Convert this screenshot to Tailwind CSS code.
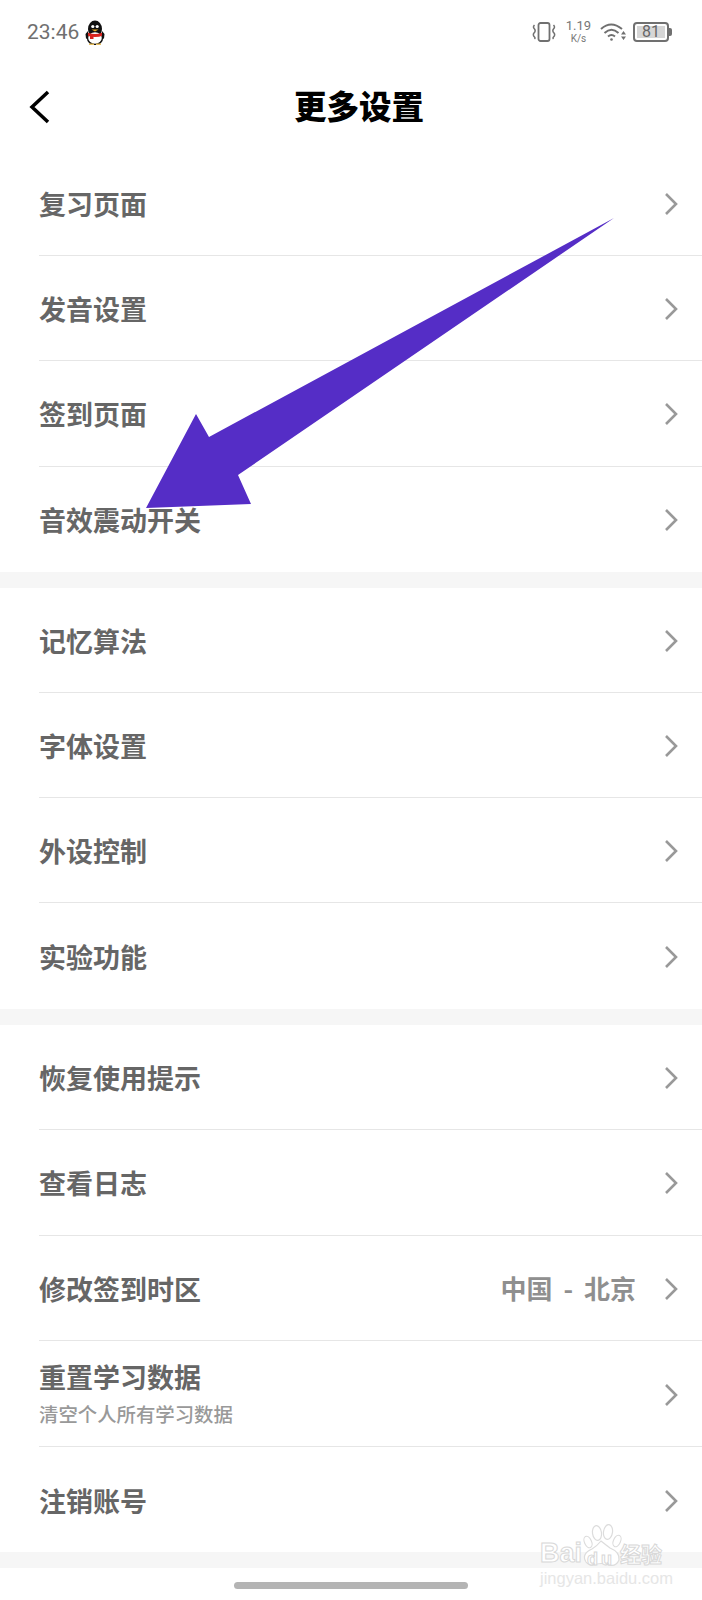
<!DOCTYPE html>
<html lang="zh">
<head>
<meta charset="utf-8">
<script src="https://cdn.jsdelivr.net/npm/@tailwindcss/browser@4"></script>
<title>更多设置</title>
</head>
<body class="bg-white">
<div class="relative w-[702px] h-[1600px] overflow-hidden bg-white font-['Noto_Sans_CJK_SC',sans-serif]">

  <!-- status bar -->
  <div class="h-[64px] flex items-center justify-between pl-[27px] pr-[30px]">
    <div class="flex items-center gap-[6px]">
      <span class="font-['Roboto',sans-serif] text-[21px] leading-none text-[#707070]">23:46</span>
      <svg width="20" height="25" viewBox="0 0 20 25">
        <ellipse cx="10" cy="9" rx="7" ry="8.5" fill="#111"/>
        <ellipse cx="10" cy="18" rx="7.5" ry="6.5" fill="#fff" stroke="#111" stroke-width="1.4"/>
        <path d="M2.5 12.5Q10 15.5 17.5 12.5L18 15.5Q10 18.5 2 15.5Z" fill="#d9231e"/>
        <rect x="5" y="15" width="3.5" height="4" fill="#d9231e"/>
        <circle cx="7.8" cy="6.5" r="1.6" fill="#fff"/><circle cx="12.2" cy="6.5" r="1.6" fill="#fff"/>
        <path d="M6.5 9.5H13.5L10 11.5Z" fill="#e8a820"/>
        <path d="M0.5 14L3 11V19L1 18.5ZM19.5 14L17 11V19L19 18.5Z" fill="#111"/>
        <path d="M4 23.5H9V25H4ZM11 23.5H16V25H11Z" fill="#e8c060"/>
      </svg>
    </div>
    <div class="flex items-center text-[#777]">
      <svg width="24" height="20" viewBox="0 0 24 20" fill="none" stroke="#707070">
        <rect x="6.5" y="1" width="11" height="18" rx="2" stroke-width="1.8"/>
        <path d="M2.5 3Q0.5 5 2.5 7Q4 9 2 11Q0.5 13 2.5 15Q3.5 16 2.5 17" stroke-width="1.5"/>
        <path d="M21.5 3Q23.5 5 21.5 7Q20 9 22 11Q23.5 13 21.5 15Q20.5 16 21.5 17" stroke-width="1.5"/>
      </svg>
      <div class="w-[45px] flex flex-col items-center font-['Roboto',sans-serif] text-[#777]">
        <span class="text-[13px] leading-[13px]">1.19</span>
        <span class="text-[10px] leading-[12px] mt-[1px]">K/s</span>
      </div>
      <svg width="27" height="20" viewBox="0 0 27 20" fill="none" stroke="#707070" stroke-width="2" class="-ml-[1px]">
        <path d="M1 7Q11 -2 22 7"/>
        <path d="M4.5 11Q11.5 4.5 18.5 11"/>
        <path d="M8 14.5Q11.5 11.5 15 14.5"/>
        <circle cx="11.5" cy="17.5" r="1.3" fill="#707070" stroke="none"/>
        <path d="M21 12.5L23.5 9L26 12.5ZM21 14.5H26L23.5 18Z" fill="#707070" stroke="none"/>
      </svg>
      <div class="ml-[6px] flex items-center">
        <div class="w-[36px] h-[20px] rounded-[4px] border-2 border-[#707070] p-[2px] flex">
          <div class="w-full bg-[#d6d6d6] flex items-center justify-center font-['Roboto',sans-serif] text-[16px] leading-none text-[#666]">81</div>
        </div>
        <div class="w-[3px] h-[8px] bg-[#707070] rounded-r-[2px]"></div>
      </div>
    </div>
  </div>

  <!-- title bar -->
  <div class="relative h-[87px] flex items-center justify-center">
    <svg class="absolute left-[28px] top-[26px]" width="24" height="34" viewBox="0 0 24 34" fill="none" stroke="#000" stroke-width="3.5">
      <path d="M20 2L4 17L20 32"/>
    </svg>
    <h1 class="text-[32.5px] leading-none font-black text-black -mt-[4px] ml-[16px]">更多设置</h1>
  </div>

  <!-- group 1 -->
  <section>
    <a class="h-[105.2px] ml-[39px] pr-[24px] flex items-center justify-between border-b border-[#e6e6e6]"><span class="text-[27px] leading-none font-bold text-[#666] pt-[1px]">复习页面</span><svg class="mt-[2px]" width="14" height="22" viewBox="0 0 14 22" fill="none" stroke="#999" stroke-width="2.6"><path d="M2 1L12 11L2 21"/></svg></a>
    <a class="h-[105.2px] ml-[39px] pr-[24px] flex items-center justify-between border-b border-[#e6e6e6]"><span class="text-[27px] leading-none font-bold text-[#666] pt-[1px]">发音设置</span><svg class="mt-[2px]" width="14" height="22" viewBox="0 0 14 22" fill="none" stroke="#999" stroke-width="2.6"><path d="M2 1L12 11L2 21"/></svg></a>
    <a class="h-[105.2px] ml-[39px] pr-[24px] flex items-center justify-between border-b border-[#e6e6e6]"><span class="text-[27px] leading-none font-bold text-[#666] pt-[1px]">签到页面</span><svg class="mt-[2px]" width="14" height="22" viewBox="0 0 14 22" fill="none" stroke="#999" stroke-width="2.6"><path d="M2 1L12 11L2 21"/></svg></a>
    <a class="h-[105.2px] ml-[39px] pr-[24px] flex items-center justify-between"><span class="text-[27px] leading-none font-bold text-[#666] pt-[1px]">音效震动开关</span><svg class="mt-[2px]" width="14" height="22" viewBox="0 0 14 22" fill="none" stroke="#999" stroke-width="2.6"><path d="M2 1L12 11L2 21"/></svg></a>
  </section>
  <div class="h-[16px] bg-[#f6f6f6]"></div>

  <!-- group 2 -->
  <section>
    <a class="h-[105.2px] ml-[39px] pr-[24px] flex items-center justify-between border-b border-[#e6e6e6]"><span class="text-[27px] leading-none font-bold text-[#666] pt-[1px]">记忆算法</span><svg class="mt-[2px]" width="14" height="22" viewBox="0 0 14 22" fill="none" stroke="#999" stroke-width="2.6"><path d="M2 1L12 11L2 21"/></svg></a>
    <a class="h-[105.2px] ml-[39px] pr-[24px] flex items-center justify-between border-b border-[#e6e6e6]"><span class="text-[27px] leading-none font-bold text-[#666] pt-[1px]">字体设置</span><svg class="mt-[2px]" width="14" height="22" viewBox="0 0 14 22" fill="none" stroke="#999" stroke-width="2.6"><path d="M2 1L12 11L2 21"/></svg></a>
    <a class="h-[105.2px] ml-[39px] pr-[24px] flex items-center justify-between border-b border-[#e6e6e6]"><span class="text-[27px] leading-none font-bold text-[#666] pt-[1px]">外设控制</span><svg class="mt-[2px]" width="14" height="22" viewBox="0 0 14 22" fill="none" stroke="#999" stroke-width="2.6"><path d="M2 1L12 11L2 21"/></svg></a>
    <a class="h-[105.2px] ml-[39px] pr-[24px] flex items-center justify-between"><span class="text-[27px] leading-none font-bold text-[#666] pt-[1px]">实验功能</span><svg class="mt-[2px]" width="14" height="22" viewBox="0 0 14 22" fill="none" stroke="#999" stroke-width="2.6"><path d="M2 1L12 11L2 21"/></svg></a>
  </section>
  <div class="h-[16px] bg-[#f6f6f6]"></div>

  <!-- group 3 -->
  <section>
    <a class="h-[105.6px] ml-[39px] pr-[24px] flex items-center justify-between border-b border-[#e6e6e6]"><span class="text-[27px] leading-none font-bold text-[#666] pt-[1px]">恢复使用提示</span><svg class="mt-[2px]" width="14" height="22" viewBox="0 0 14 22" fill="none" stroke="#999" stroke-width="2.6"><path d="M2 1L12 11L2 21"/></svg></a>
    <a class="h-[105.6px] ml-[39px] pr-[24px] flex items-center justify-between border-b border-[#e6e6e6]"><span class="text-[27px] leading-none font-bold text-[#666] pt-[1px]">查看日志</span><svg class="mt-[2px]" width="14" height="22" viewBox="0 0 14 22" fill="none" stroke="#999" stroke-width="2.6"><path d="M2 1L12 11L2 21"/></svg></a>
    <a class="h-[105.6px] ml-[39px] pr-[24px] flex items-center justify-between border-b border-[#e6e6e6]"><span class="text-[27px] leading-none font-bold text-[#666] pt-[1px]">修改签到时区</span><span class="flex items-center gap-[28px]"><span class="text-[26px] leading-none font-bold text-[#8f8f8f] pt-[1px] [word-spacing:5px]">中国 - 北京</span><svg class="mt-[2px]" width="14" height="22" viewBox="0 0 14 22" fill="none" stroke="#999" stroke-width="2.6"><path d="M2 1L12 11L2 21"/></svg></span></a>
    <a class="h-[105.6px] ml-[39px] pr-[24px] flex items-center justify-between border-b border-[#e6e6e6]"><span class="flex flex-col gap-[14px]"><span class="text-[27px] leading-none font-bold text-[#666]">重置学习数据</span><span class="text-[19.4px] leading-none font-medium text-[#999]">清空个人所有学习数据</span></span><svg class="mt-[2px]" width="14" height="22" viewBox="0 0 14 22" fill="none" stroke="#999" stroke-width="2.6"><path d="M2 1L12 11L2 21"/></svg></a>
    <a class="h-[105.6px] ml-[39px] pr-[24px] flex items-center justify-between"><span class="text-[27px] leading-none font-bold text-[#666] pt-[1px]">注销账号</span><svg class="mt-[2px]" width="14" height="22" viewBox="0 0 14 22" fill="none" stroke="#999" stroke-width="2.6"><path d="M2 1L12 11L2 21"/></svg></a>
  </section>
  <div class="h-[16px] bg-[#f6f6f6]"></div>

  <!-- home indicator -->
  <div class="h-[33px] flex justify-center pt-[14px]">
    <div class="w-[234px] h-[7px] rounded-full bg-[#b4b4b4]"></div>
  </div>

  <!-- annotation arrow -->
  <svg class="absolute left-0 top-0 pointer-events-none" width="702" height="1600" viewBox="0 0 702 1600">
    <polygon points="614,218 209,437 196,414 146,508 251,504 238,475" fill="#552dc6"/>
  </svg>

  <!-- watermark -->
  <div class="absolute left-[540px] top-[1524px] w-[124px] h-[62px] pointer-events-none">
    <svg class="absolute left-[42px] top-0" width="40" height="44" viewBox="0 0 40 44" fill="#fff" stroke="#dcdcdc" stroke-width="1.2">
      <ellipse cx="15" cy="9" rx="4.5" ry="7.5" transform="rotate(-8 15 9)"/>
      <ellipse cx="26" cy="8" rx="4.5" ry="7.5" transform="rotate(8 26 8)"/>
      <ellipse cx="6" cy="18" rx="3.5" ry="6" transform="rotate(-25 6 18)"/>
      <ellipse cx="35" cy="17" rx="3.5" ry="6" transform="rotate(25 35 17)"/>
      <path d="M4 38Q-1 30 10 25Q15 22 19 17Q24 21 28 24Q38 28 37 36Q34 43 27 41Q19 38 12 41Q7 42 4 38Z"/>
    </svg>
    <div class="absolute left-0 top-[16px] font-['Liberation_Sans',sans-serif] text-[27px] leading-none font-bold text-white [-webkit-text-stroke:1px_#d8d8d8]">Bai</div>
    <div class="absolute left-[47px] top-[26px] font-['Liberation_Sans',sans-serif] text-[18px] leading-none tracking-[3px] font-bold text-white [-webkit-text-stroke:1px_#d8d8d8]">du</div>
    <div class="absolute left-[80px] top-[19px] text-[21px] leading-none font-bold text-white [-webkit-text-stroke:1px_#d8d8d8]">经验</div>
    <div class="absolute left-0 top-[46px] font-['Liberation_Sans',sans-serif] text-[16.5px] leading-none text-[#e6e6e6]">jingyan.baidu.com</div>
  </div>
</div>
</body>
</html>
